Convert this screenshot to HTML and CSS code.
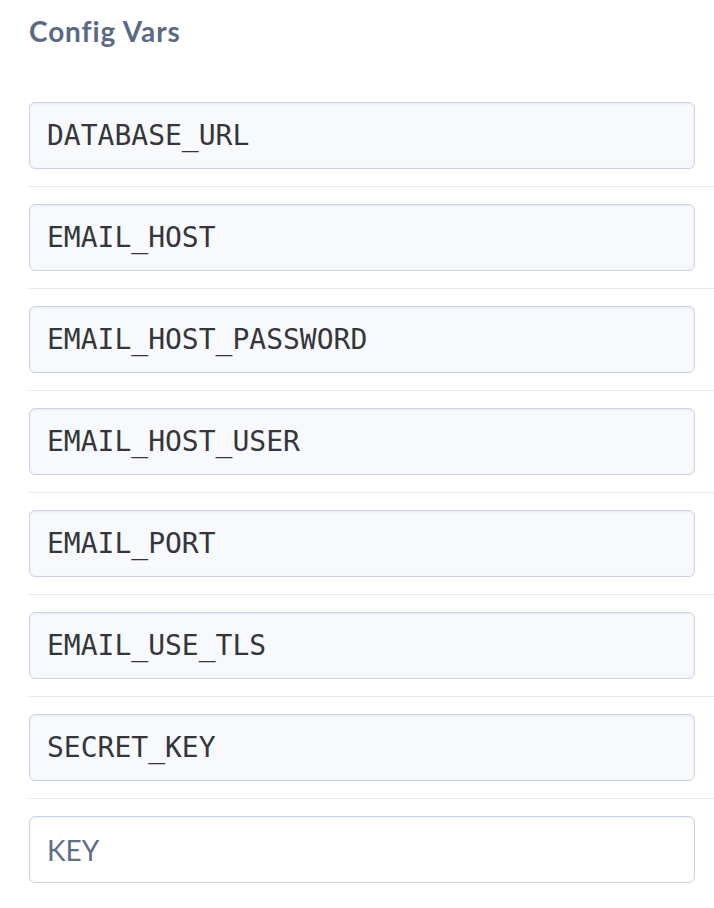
FILE: index.html
```html
<!DOCTYPE html>
<html>
<head>
<meta charset="utf-8">
<link rel="stylesheet" href="styles.css">
</head>
<body>
<div class="page">
  <h2 class="title">Config Vars</h2>
  <ul class="vars">
    <li class="row"><div class="field">DATABASE_URL</div></li>
    <li class="row"><div class="field">EMAIL_HOST</div></li>
    <li class="row"><div class="field">EMAIL_HOST_PASSWORD</div></li>
    <li class="row"><div class="field">EMAIL_HOST_USER</div></li>
    <li class="row"><div class="field">EMAIL_PORT</div></li>
    <li class="row"><div class="field">EMAIL_USE_TLS</div></li>
    <li class="row"><div class="field">SECRET_KEY</div></li>
    <li class="row last"><div class="field empty">KEY</div></li>
  </ul>
</div>
</body>
</html>
```
FILE: styles.css
```css
html, body {
  margin: 0;
  padding: 0;
  background: #ffffff;
}
.page {
  padding-left: 29px;
  width: 685px;
}
.title {
  margin: 0;
  padding-top: 14px;
  height: 85px;
  box-sizing: border-box;
  font-family: Lato, "Open Sans", sans-serif;
  font-weight: 700;
  font-size: 28px;
  line-height: 34px;
  color: #5a6a84;
  letter-spacing: 0.9px;
}
.vars {
  list-style: none;
  margin: 0;
  padding: 0;
}
.row {
  padding: 17px 0;
  border-bottom: 1px solid #e4e8f0;
}
.row.last {
  border-bottom: none;
}
.field {
  width: 666px;
  height: 67px;
  box-sizing: border-box;
  border: 1.5px solid #cbd3e4;
  border-radius: 6px;
  background: #f8f9fc;
  box-shadow: inset 0 1px 2px rgba(180, 190, 210, 0.25);
  padding-left: 17px;
  display: flex;
  align-items: center;
  font-family: "DejaVu Sans Mono", monospace;
  font-size: 28px;
  color: #34363b;
}
.field.empty {
  background: #ffffff;
  font-family: Lato, "Open Sans", sans-serif;
  color: #5f708a;
}
```
